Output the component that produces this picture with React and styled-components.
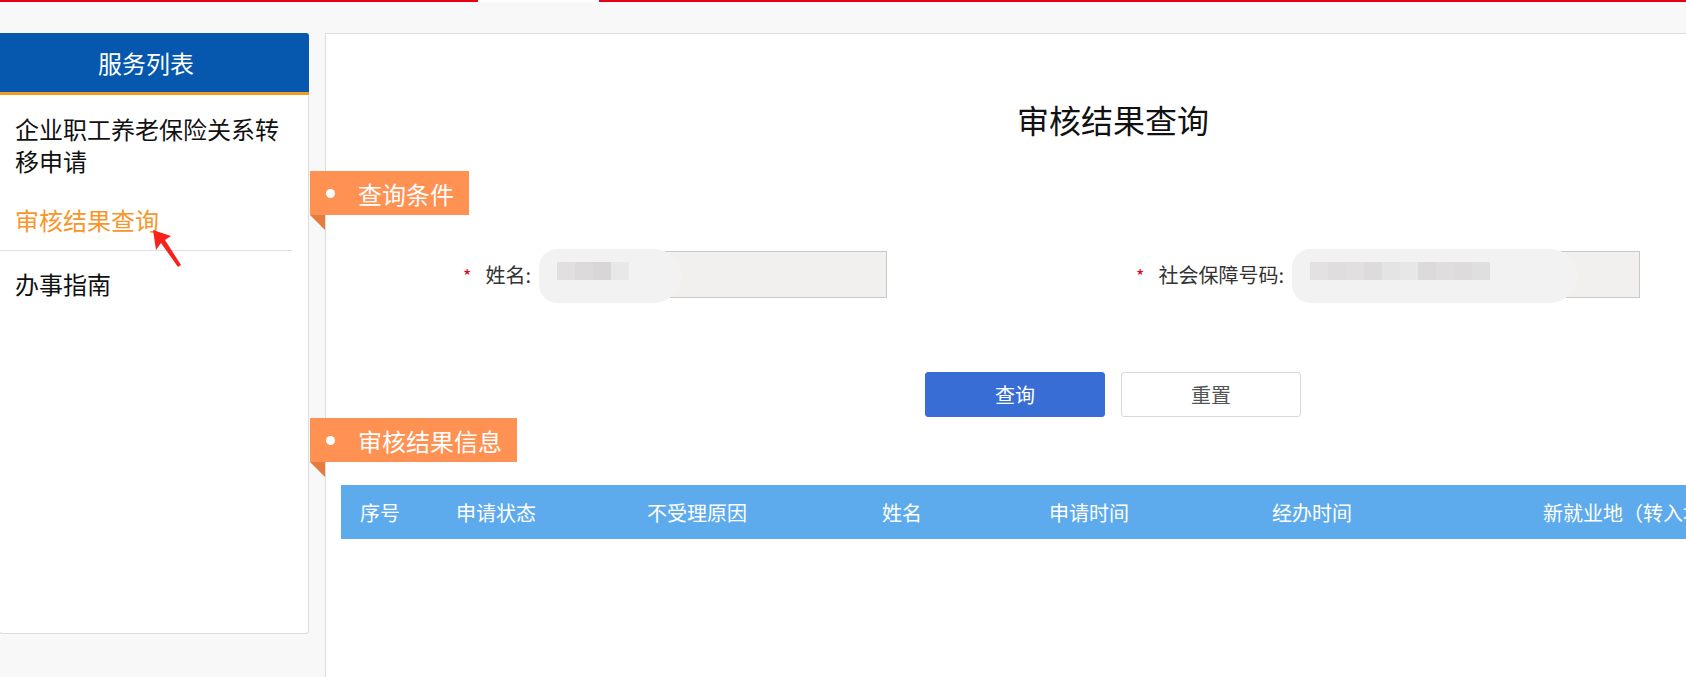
import React from 'react';
import styled, { createGlobalStyle } from 'styled-components';

const GlobalStyle = createGlobalStyle`
  body {
    margin: 0;
    background: #f8f8f8;
    overflow: hidden;
    font-family: "Noto Sans CJK SC", "Liberation Sans", sans-serif;
  }
`;

const TopBar = styled.div`
  display: flex;
  height: 2px;
`;

const TopSeg = styled.div`
  height: 2px;
  background: ${({ active }) => (active ? '#fff' : '#e60012')};
  width: ${({ w }) => (w ? w + 'px' : 'auto')};
  flex: ${({ w }) => (w ? '0 0 auto' : '1')};
`;

const Page = styled.div`
  display: flex;
  align-items: flex-start;
  gap: 16px;
  padding-top: 31px;
`;

const Sidebar = styled.div`
  position: relative;
  flex: 0 0 auto;
  width: 310px;
  height: 601px;
  margin-left: -1px;
  background: #fff;
  border: 1px solid #ddd;
  border-radius: 3px;
  box-sizing: border-box;
`;

const SideHeader = styled.div`
  height: 59px;
  background: #0558ad;
  border-bottom: 3px solid #f39a1e;
  border-radius: 0 3px 0 0;
  color: #fff;
  font-size: 24px;
  display: flex;
  align-items: center;
  justify-content: center;
  padding-right: 16px;
  margin: -1px -1px 0 -1px;
`;

const SideItem = styled.div`
  font-size: 24px;
  line-height: 32px;
  padding: ${({ pad }) => pad};
  padding-left: 15px;
  padding-right: 15px;
  color: ${({ active }) => (active ? '#f7962b' : '#111')};
  border-bottom: ${({ divided }) => (divided ? '1px solid #ddd' : 'none')};
  margin-right: ${({ divided }) => (divided ? '16px' : '0')};
`;

const Arrow = styled.svg`
  position: absolute;
  left: 148px;
  top: 191px;
`;

const Main = styled.div`
  position: relative;
  flex: 0 0 auto;
  width: 1576px;
  min-height: 700px;
  background: #fff;
  border: 1px solid #ddd;
  box-sizing: border-box;
`;

const Title = styled.h1`
  margin: 0;
  padding-top: 63px;
  font-size: 32px;
  font-weight: normal;
  line-height: 44px;
  color: #111;
  text-align: center;
`;

const Tag = styled.div`
  position: relative;
  display: flex;
  align-items: center;
  width: ${({ w }) => w}px;
  height: 44px;
  margin-left: -16px;
  margin-top: ${({ top }) => top}px;
  background: #ff9152;
  color: #fff;
  font-size: 24px;
  box-sizing: border-box;
  padding-left: 48px;

  &::before {
    content: '';
    position: absolute;
    left: 16px;
    top: 18px;
    width: 9px;
    height: 9px;
    border-radius: 50%;
    background: #fff;
  }

  &::after {
    content: '';
    position: absolute;
    left: 0;
    top: 44px;
    border-top: 15px solid #e57b3c;
    border-left: 15px solid transparent;
  }
`;

const FormGrid = styled.div`
  display: grid;
  grid-template-columns: 753px 753px;
  margin-top: 36px;
`;

const Field = styled.div`
  display: flex;
  align-items: center;
  gap: 19px;
`;

const Label = styled.label`
  width: 205px;
  text-align: right;
  font-size: 20px;
  color: #333;
`;

const Star = styled.span`
  color: #e60012;
  margin-right: 14px;
  font-size: 18px;
`;

const InputBox = styled.div`
  position: relative;
  width: 337px;
  height: 47px;
  background: #f1f0ef;
  border: 1px solid #c8c8c8;
  box-sizing: border-box;
`;

const Blur = styled.div`
  position: absolute;
  left: -12px;
  top: -3px;
  width: ${({ w }) => w}px;
  height: 54px;
  border-radius: 27px 40px 40px 27px;
  background: #f3f2f2;
  display: flex;
  align-items: center;
  padding-left: 18px;
  box-sizing: border-box;
  padding-bottom: 10px;
`;

const Pixel = styled.span`
  width: 18px;
  height: 18px;
  background: ${({ c }) => c};
`;

const Buttons = styled.div`
  display: flex;
  justify-content: center;
  gap: 16px;
  margin-top: 74px;
`;

const Button = styled.button`
  width: 180px;
  height: 45px;
  border-radius: 3px;
  font-family: inherit;
  font-size: 20px;
  cursor: pointer;
  background: ${({ primary }) => (primary ? '#386dd6' : '#fff')};
  color: ${({ primary }) => (primary ? '#fff' : '#555')};
  border: 1px solid ${({ primary }) => (primary ? '#386dd6' : '#d9d9d9')};
`;

const TableHead = styled.div`
  display: grid;
  grid-template-columns: 96px 191px 235px 167px 223px 271px 1fr;
  height: 54px;
  align-items: center;
  margin: 23px 15px 0 15px;
  background: #5dabec;
  color: #fff;
  font-size: 20px;
`;

const HeadCell = styled.div`
  padding-left: 19px;
  white-space: nowrap;
`;

const nameBlocks = ['#e1dfdf', '#dcdada', '#d8d6d6', '#e9e8e8'];
const idBlocks = ['#e3e1e1', '#dfdddd', '#e1dfdf', '#dddbdb', '#e5e4e4', '#e8e7e7', '#dcdada', '#dfdddd', '#dddbdb', '#e0dfdf'];
const columns = ['序号', '申请状态', '不受理原因', '姓名', '申请时间', '经办时间', '新就业地（转入地）'];

export default function App() {
  return (
    <>
      <GlobalStyle />
      <TopBar>
        <TopSeg w={478} />
        <TopSeg w={121} active />
        <TopSeg />
      </TopBar>
      <Page>
        <Sidebar>
          <SideHeader>服务列表</SideHeader>
          <SideItem pad="18px 0 13px">企业职工养老保险关系转移申请</SideItem>
          <SideItem pad="14px 0 14px" active divided>审核结果查询</SideItem>
          <SideItem pad="17px 0 14px">办事指南</SideItem>
          <Arrow width="40" height="45" viewBox="0 0 40 45">
            <polygon points="5,5 23,11 17,15 33,40 30,42 13,18 8,25" fill="#f5231b" />
          </Arrow>
        </Sidebar>
        <Main>
          <Title>审核结果查询</Title>
          <Tag w={159} top={30}>查询条件</Tag>
          <FormGrid>
            <Field>
              <Label><Star>*</Star>姓名:</Label>
              <InputBox>
                <Blur w={142}>
                  {nameBlocks.map((c, i) => <Pixel key={i} c={c} />)}
                </Blur>
              </InputBox>
            </Field>
            <Field>
              <Label><Star>*</Star>社会保障号码:</Label>
              <InputBox>
                <Blur w={285}>
                  {idBlocks.map((c, i) => <Pixel key={i} c={c} />)}
                </Blur>
              </InputBox>
            </Field>
          </FormGrid>
          <Buttons>
            <Button primary>查询</Button>
            <Button>重置</Button>
          </Buttons>
          <Tag w={207} top={1}>审核结果信息</Tag>
          <TableHead>
            {columns.map(c => <HeadCell key={c}>{c}</HeadCell>)}
          </TableHead>
        </Main>
      </Page>
    </>
  );
}
